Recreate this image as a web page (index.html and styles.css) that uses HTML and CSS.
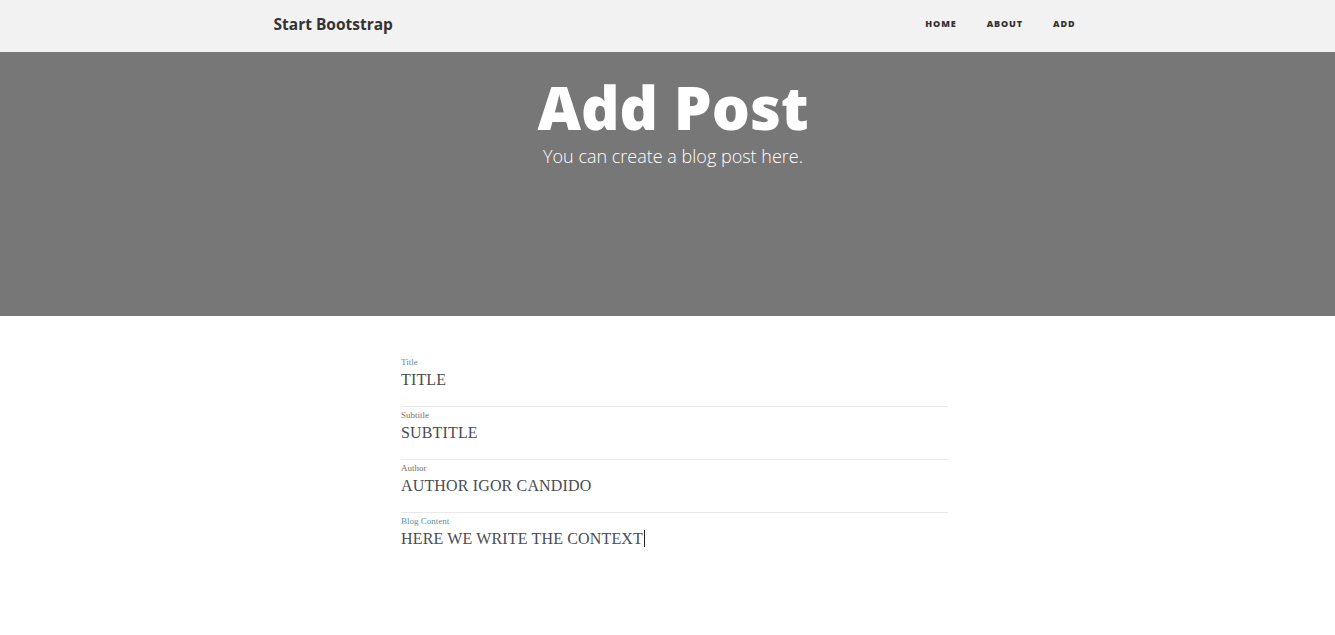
FILE: index.html
```html
<!DOCTYPE html>
<html lang="en">
<head>
<meta charset="utf-8">
<title>Add Post</title>
<link rel="stylesheet" href="styles.css">
</head>
<body>
<nav class="navbar">
  <div class="nav-inner">
    <a class="brand" href="#">Start Bootstrap</a>
    <ul class="nav-links">
      <li><a href="#">Home</a></li>
      <li><a href="#">About</a></li>
      <li><a href="#">Add</a></li>
    </ul>
  </div>
</nav>
<header class="masthead">
  <h1 class="masthead-title">Add Post</h1>
  <p class="masthead-sub">You can create a blog post here.</p>
</header>
<main class="form-wrap">
  <form class="post-form">
    <div class="field">
      <label class="field-label label-blue" for="title">Title</label>
      <input class="field-input" id="title" type="text" value="TITLE">
    </div>
    <div class="field">
      <label class="field-label" for="subtitle">Subtitle</label>
      <input class="field-input" id="subtitle" type="text" value="SUBTITLE">
    </div>
    <div class="field">
      <label class="field-label" for="author">Author</label>
      <input class="field-input" id="author" type="text" value="AUTHOR IGOR CANDIDO">
    </div>
    <div class="field field-last">
      <span class="field-label label-blue">Blog Content</span>
      <div class="field-text"><span class="caret-text">HERE WE WRITE THE CONTEXT</span></div>
    </div>
  </form>
</main>
</body>
</html>
```

FILE: styles.css
```css
* { box-sizing: border-box; }
html, body { margin: 0; padding: 0; }
body {
  font-family: "Liberation Serif", "Times New Roman", serif;
  color: #404040;
  background: #fff;
}
.navbar {
  height: 52px;
  background: #f2f2f2;
}
.nav-inner {
  width: 832px;
  margin-left: calc(50% - 409px);
  padding: 0 15px;
  height: 100%;
  display: flex;
  align-items: center;
  justify-content: space-between;
}
.brand {
  font-family: "Open Sans", sans-serif;
  font-weight: 700;
  font-size: 15.5px;
  color: #333;
  text-decoration: none;
  margin-top: -5px;
}
.nav-links {
  list-style: none;
  margin: 0;
  padding: 0;
  display: flex;
  gap: 30px;
  margin-top: -8px;
}
.nav-links a {
  font-family: "Open Sans", sans-serif;
  font-weight: 800;
  font-size: 9px;
  letter-spacing: 0.9px;
  text-transform: uppercase;
  color: #333;
  text-decoration: none;
}
.masthead {
  height: 264px;
  background: #777;
  color: #fff;
  text-align: center;
  padding-top: 27px;
}
.masthead-title {
  margin: 0;
  font-family: "Open Sans", sans-serif;
  font-weight: 800;
  font-size: 60px;
  line-height: 56px;
  padding-left: 11px;
}
.masthead-sub {
  margin: 9px 0 0;
  font-family: "Open Sans", sans-serif;
  font-weight: 300;
  font-size: 18px;
  line-height: 24px;
  padding-left: 11px;
}
.form-wrap {
  width: 547px;
  margin-left: calc(50% - 266.5px);
  padding-top: 38px;
}
.post-form {
  display: flex;
  flex-direction: column;
}
.field {
  border-bottom: 1px solid #e8e8e8;
  height: 53px;
  padding-top: 3px;
  display: flex;
  flex-direction: column;
}
.field-last { border-bottom: none; }
.field-label {
  font-size: 9px;
  line-height: 11px;
  color: #7a7068;
}
.label-blue { color: #5a8fa3; }
.field-input, .field-text {
  font-family: "Liberation Serif", "Times New Roman", serif;
  font-size: 16px;
  line-height: 20px;
  color: #4a4c55;
  border: none;
  outline: none;
  padding: 0;
  margin: 2px 0 0;
  background: transparent;
  width: 100%;
  letter-spacing: 0.15px;
}
.caret-text {
  border-right: 1px solid #222;
  padding-right: 1px;
}
```
